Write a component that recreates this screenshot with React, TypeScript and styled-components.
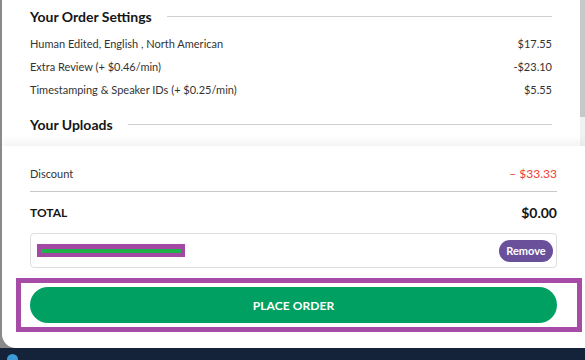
import React from 'react';
import styled, { createGlobalStyle } from 'styled-components';

const GlobalStyle = createGlobalStyle`
  html, body {
    margin: 0;
    padding: 0;
    background: #14233a;
    font-family: Lato, "Noto Sans", sans-serif;
  }
`;

const Page = styled.div`
  width: 585px;
  height: 360px;
  overflow: hidden;
  display: flex;
  flex-direction: column;
  background: #14233a;
`;

const Stage = styled.div`
  height: 348px;
  display: flex;
  background: #8a8a8a;
`;

const Gutter = styled.div`
  width: 2px;
`;

const Panel = styled.section`
  flex: 1;
  background: #fff;
  border-bottom-left-radius: 14px;
  display: flex;
  flex-direction: column;
  overflow: hidden;
`;

const ScrollArea = styled.div`
  height: 146px;
  display: flex;
`;

const ScrollContent = styled.div`
  flex: 1;
  padding: 0 28px;
  overflow: hidden;
`;

const ScrollTrack = styled.div`
  width: 5px;
  background: #f1f1f1;
`;

const ScrollThumb = styled.div`
  height: 117px;
  background: #c8c8c8;
`;

const SectionHeading = styled.h3<{ $mt?: number }>`
  margin: ${(p) => p.$mt || 0}px 0 0;
  height: 32px;
  display: flex;
  align-items: center;
  gap: 15px;
  font-size: 14px;
  font-weight: 700;
  color: #151515;
  &::after {
    content: '';
    flex: 1;
    height: 1px;
    background: #cfcfcf;
  }
`;

const LineItem = styled.div`
  height: 23px;
  display: flex;
  align-items: center;
  justify-content: space-between;
  font-size: 11px;
  color: #333;
`;

const Summary = styled.div`
  flex: 1;
  padding: 15px 28px 0;
  box-shadow: 0 -5px 8px rgba(0, 0, 0, 0.05);
  position: relative;
  display: flex;
  flex-direction: column;
`;

const DiscountRow = styled.div`
  height: 24px;
  display: flex;
  align-items: center;
  justify-content: space-between;
  font-size: 11px;
  color: #333;
`;

const DiscountValue = styled.span`
  color: #ef4136;
  font-size: 12px;
`;

const Divider = styled.hr`
  margin: 6px 0 0;
  border: 0;
  height: 1px;
  background: #c9c9c9;
`;

const TotalRow = styled.div`
  margin-top: 6px;
  height: 28px;
  display: flex;
  align-items: center;
  justify-content: space-between;
  color: #151515;
  font-weight: 700;
`;

const TotalLabel = styled.span`
  font-size: 12px;
`;

const TotalValue = styled.span`
  font-size: 14px;
`;

const CouponBox = styled.div`
  margin-top: 7px;
  height: 35px;
  box-sizing: border-box;
  border: 1px solid #dedede;
  border-radius: 4px;
  display: flex;
  align-items: center;
  justify-content: space-between;
  padding: 0 3px 0 6px;
`;

const Redacted = styled.div`
  width: 148px;
  box-sizing: border-box;
  padding: 5px 4px 4px;
  background: #a349a4;
`;

const RedactedBar = styled.div`
  height: 4px;
  background: #1fb14c;
`;

const RemoveButton = styled.button`
  width: 54px;
  height: 22px;
  border: 0;
  border-radius: 11px;
  background: #6a4f9b;
  color: #fff;
  font-family: inherit;
  font-size: 11px;
  font-weight: 700;
  padding: 0;
`;

const Highlight = styled.div`
  margin: 10px -25px 0 -14px;
  border: 5px solid #a64ca6;
  padding: 4px 20px 4px 9px;
`;

const PlaceOrderButton = styled.button`
  width: 100%;
  height: 36px;
  border: 0;
  border-radius: 18px;
  background: #00a063;
  color: #fff;
  font-family: inherit;
  font-size: 12px;
  font-weight: 700;
  letter-spacing: 0.1px;
`;

const Footer = styled.div`
  flex: 1;
  position: relative;
`;

const Dot = styled.span`
  position: absolute;
  left: 7px;
  top: 6px;
  width: 11px;
  height: 11px;
  border-radius: 50%;
  background: #3d9bd8;
`;

const items = [
  { label: 'Human Edited, English , North American', price: '$17.55' },
  { label: 'Extra Review (+ $0.46/min)', price: '-$23.10' },
  { label: 'Timestamping & Speaker IDs (+ $0.25/min)', price: '$5.55' },
];

export default function App() {
  return (
    <Page>
      <GlobalStyle />
      <Stage>
        <Gutter />
        <Panel>
          <ScrollArea>
            <ScrollContent>
              <SectionHeading>Your Order Settings</SectionHeading>
              {items.map((it) => (
                <LineItem key={it.label}>
                  <span>{it.label}</span>
                  <span>{it.price}</span>
                </LineItem>
              ))}
              <SectionHeading $mt={7}>Your Uploads</SectionHeading>
            </ScrollContent>
            <ScrollTrack>
              <ScrollThumb />
            </ScrollTrack>
          </ScrollArea>
          <Summary>
            <DiscountRow>
              <span>Discount</span>
              <DiscountValue>– $33.33</DiscountValue>
            </DiscountRow>
            <Divider />
            <TotalRow>
              <TotalLabel>TOTAL</TotalLabel>
              <TotalValue>$0.00</TotalValue>
            </TotalRow>
            <CouponBox>
              <Redacted>
                <RedactedBar />
              </Redacted>
              <RemoveButton>Remove</RemoveButton>
            </CouponBox>
            <Highlight>
              <PlaceOrderButton>PLACE ORDER</PlaceOrderButton>
            </Highlight>
          </Summary>
        </Panel>
      </Stage>
      <Footer>
        <Dot />
      </Footer>
    </Page>
  );
}
